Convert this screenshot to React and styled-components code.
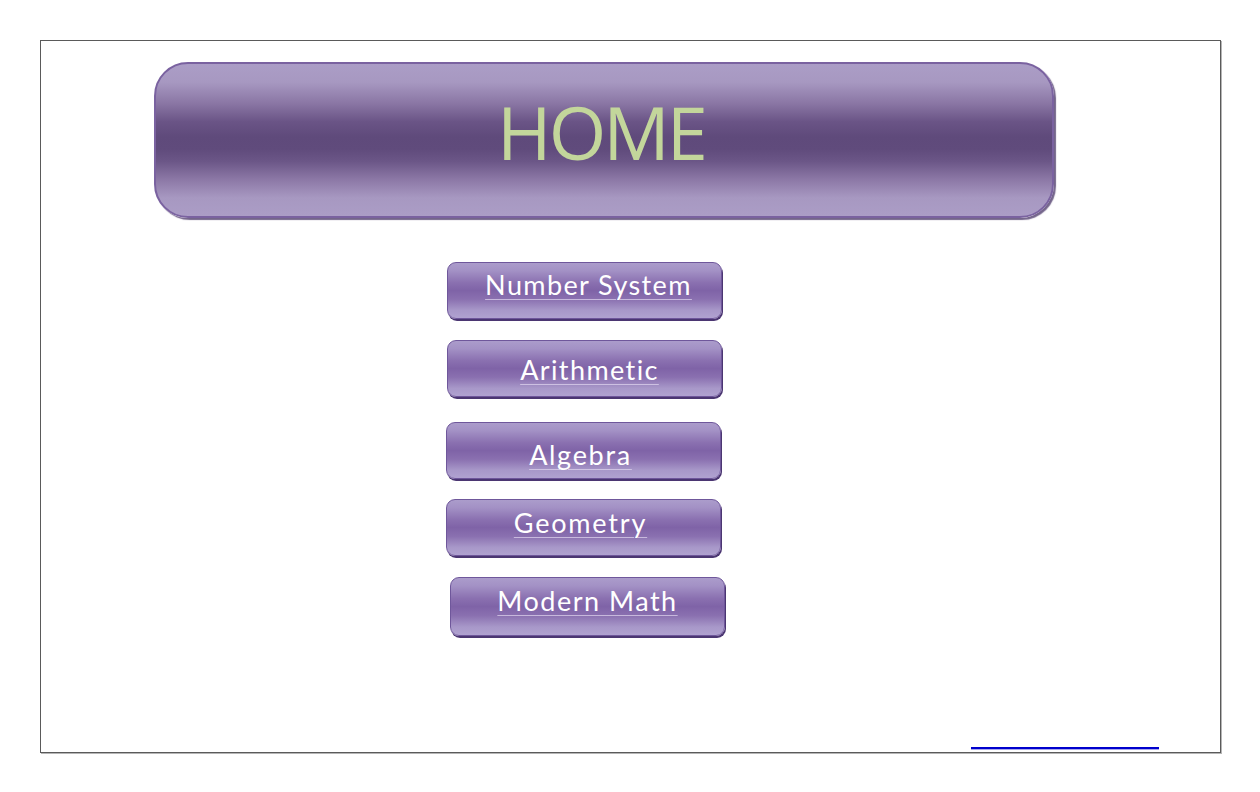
import React from "react";
import styled, { createGlobalStyle } from "styled-components";

const GlobalStyle = createGlobalStyle`
  html, body {
    margin: 0;
    padding: 0;
    background: #fff;
  }
  * {
    box-sizing: border-box;
  }
`;

const Frame = styled.div`
  margin: 40px;
  width: 1181px;
  height: 713px;
  border: 1px solid #5a5a5a;
  box-shadow: 1px 1px 0 #b5b5b5;
  display: flex;
  flex-direction: column;
  padding: 21px 0 0 113px;
`;

const Banner = styled.div`
  width: 900px;
  height: 156px;
  border: 2px solid #7a62a0;
  border-radius: 34px;
  background: linear-gradient(
    to bottom,
    #ab9dc6 0%,
    #a798c1 12%,
    #8a76a4 26%,
    #6a5486 38%,
    #5f4a7b 48%,
    #604b7c 56%,
    #6b5687 64%,
    #8c78a6 76%,
    #a798c1 88%,
    #ab9dc6 100%
  );
  box-shadow: 2px 2px 1px rgba(70, 50, 100, 0.75);
  display: flex;
  align-items: center;
  justify-content: center;
`;

const Title = styled.h1`
  margin: 0 6px 18px 0;
  font-family: "Open Sans", "Noto Sans", sans-serif;
  font-weight: 400;
  font-size: 74px;
  letter-spacing: -3px;
  color: #c3d69b;
`;

const Menu = styled.div`
  display: flex;
  flex-direction: column;
  align-items: flex-start;
`;

const MenuButton = styled.a`
  display: flex;
  justify-content: center;
  align-items: center;
  width: 275px;
  height: ${(p) => p.$h || 57}px;
  margin-top: ${(p) => p.$top}px;
  margin-left: ${(p) => p.$left}px;
  border: 1px solid #6f579b;
  border-radius: 9px;
  background: linear-gradient(
    to bottom,
    #ab9ccb 0%,
    #a391c5 14%,
    #8a70b0 36%,
    #7f63a7 50%,
    #8a70b0 66%,
    #a898c9 86%,
    #b0a2d0 100%
  );
  box-shadow: 1px 2px 0 #4b3672;
  text-decoration: none;
  cursor: pointer;
`;

const Label = styled.span`
  position: relative;
  top: ${(p) => p.$shift || 0}px;
  left: ${(p) => p.$dx || 0}px;
  font-family: "Lato", "Open Sans", sans-serif;
  font-size: 27px;
  font-weight: 400;
  color: #fff;
  letter-spacing: ${(p) => p.$ls}px;
  text-decoration: underline;
  text-decoration-color: rgba(225, 215, 240, 0.7);
  text-decoration-thickness: 1px;
  text-underline-offset: 4px;
`;

const Footer = styled.div`
  margin-top: auto;
  padding: 0 0 3px 817px;
`;

const BlankLink = styled.a`
  display: block;
  width: 188px;
  height: 2px;
  background: #0000cc;
  box-shadow: 0 1px 0 #a8a8f0;
`;

const items = [
  { label: "Number System", top: 44, left: 293, shift: -6, dx: 4, ls: 1.4 },
  { label: "Arithmetic", top: 21, left: 293, shift: 1, dx: 5, ls: 1.4 },
  { label: "Algebra", top: 25, left: 292, shift: 4, dx: -3, ls: 1.7 },
  { label: "Geometry", top: 20, left: 292, shift: -5, dx: -3, ls: 1.8 },
  { label: "Modern Math", top: 21, left: 296, shift: -6, dx: 0, ls: 1.5, h: 59 },
];

export default function App() {
  return (
    <>
      <GlobalStyle />
      <Frame>
        <Banner>
          <Title>HOME</Title>
        </Banner>
        <Menu>
          {items.map((it) => (
            <MenuButton key={it.label} href="#" $top={it.top} $left={it.left} $h={it.h}>
              <Label $shift={it.shift} $dx={it.dx} $ls={it.ls}>
                {it.label}
              </Label>
            </MenuButton>
          ))}
        </Menu>
        <Footer>
          <BlankLink href="#" aria-label="link" />
        </Footer>
      </Frame>
    </>
  );
}
